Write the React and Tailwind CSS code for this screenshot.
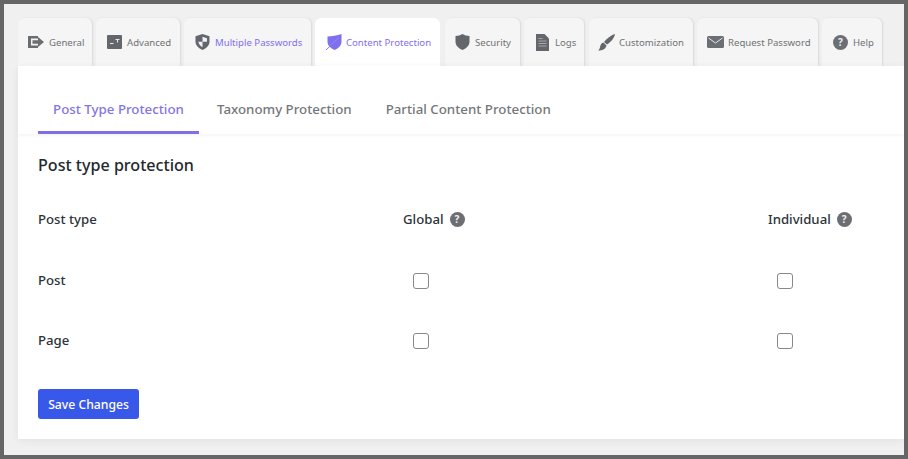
const font = { fontFamily: '"Noto Sans", sans-serif' };

const Gen = () => (
  <svg width="16" height="12" viewBox="0 0 16 12" fill="#6b6e70"><path d="M0 0h10v2.500H3v7h7V12H0z" /><path d="M4.500 4.300H10V1l6 5-6 5V7.700H4.500z" /></svg>
);
const Adv = () => (
  <svg width="15" height="14" viewBox="0 0 15 14"><rect width="15" height="14" rx="1" fill="#63666a" /><path d="M3 8.500h3.500M8.500 4.500h4M10.500 4.500v3" stroke="#e8e8e8" strokeWidth="1.100" fill="none" /></svg>
);
const Multi = () => (
  <svg width="15" height="16" viewBox="0 0 15 16"><path d="M7.500 0l7 2.300V7.500c0 4-3 6.800-7 8.500C3.500 14.300.500 11.500.500 7.500V2.300z" fill="#63666f" /><path d="M7.500 2.800l4.500 1.400v3.600H7.500zM7.500 7.800v5.400C5.500 12 3.700 10.200 3.300 7.800z" fill="#f1f1f3" /></svg>
);
const Content = () => (
  <svg width="16" height="16" viewBox="0 0 16 16"><path d="M1.500 2.500C6 2.500 11 1.500 15.500 0v7.500c0 4-2.800 6.800-6.800 8.500C4.500 14.300 1.500 11.500 1.500 7.500z" fill="#7f70ee" /><path d="M0 16L15 1.500" stroke="#7f70ee" strokeWidth=".9" /><path d="M3.500 12L13 3.500" stroke="#9d8ff3" strokeWidth=".7" /></svg>
);
const Sec = () => (
  <svg width="15" height="16" viewBox="0 0 15 16" fill="#63666a"><path d="M7.500 0c1.800 1.200 4.500 2 7 2v5.500c0 4-2.800 6.800-7 8.500-4.200-1.700-7-4.500-7-8.500V2c2.500 0 5.200-.8 7-2z" /></svg>
);
const Logs = () => (
  <svg width="13" height="17" viewBox="0 0 13 17"><path d="M0 0h8.500L13 4.500V17H0z" fill="#63666a" /><path d="M2.500 7h8M2.500 9.500h8M2.500 12h8M2.500 4.500h4" stroke="#b5b6b7" strokeWidth=".8" /></svg>
);
const Brush = () => (
  <svg width="17" height="17" viewBox="0 0 17 17" fill="#63666a"><path d="M17 0c-.5 3.500-4 8-8 10.500L6 8C9 4 13.500 1 17 0z" /><path d="M5.500 8.500L8.500 11.500c-.5 3-3.500 5-8.500 5 1.500-1 1.800-2.500 2.300-4.500S3.500 9 5.500 8.500z" /></svg>
);
const Mail = () => (
  <svg width="17" height="12" viewBox="0 0 17 12"><rect width="17" height="12" rx="1.500" fill="#6b6e72" /><path d="M1.500 2l7 5 7-5" stroke="#e8e8e8" strokeWidth="1" fill="none" /></svg>
);
const Q = ({ size = 14 }) => (
  <span className="flex items-center justify-center rounded-full bg-[#6b6e72] text-[#f0f0f0] font-bold text-[10px]" style={{ width: size, height: size }}>?</span>
);

const tabs = [
  { label: "General", icon: <Gen />, cls: "w-[74px] pl-[10px] gap-[5px]" },
  { label: "Advanced", icon: <Adv />, cls: "w-[84px] ml-[4px] pl-[11px] gap-[5px]" },
  { label: "Multiple Passwords", icon: <Multi />, cls: "w-[127px] ml-[4px] pl-[11px] gap-[5px]", hi: true },
  { label: "Content Protection", icon: <Content />, cls: "w-[125px] ml-[4px] pl-[11px] gap-[4px]", hi: true, active: true },
  { label: "Security", icon: <Sec />, cls: "w-[75px] ml-[5px] pl-[10px] gap-[5px]" },
  { label: "Logs", icon: <Logs />, cls: "w-[60px] ml-[4px] pl-[12px] gap-[6px]" },
  { label: "Customization", icon: <Brush />, cls: "w-[104px] ml-[5px] pl-[9px] gap-[4px]" },
  { label: "Request Password", icon: <Mail />, cls: "w-[121px] ml-[4px] pl-[10px] gap-[4px]" },
  { label: "Help", icon: <Q size={15} />, cls: "w-[60px] ml-[4px] pl-[11px] gap-[5px]" },
];

function Row({ name }) {
  return (
    <div className="flex items-center h-[60px] text-[13.200px] font-medium text-[#2c3338]">
      <div className="w-[375px]">{name}</div>
      <div className="w-[364px]"><input type="checkbox" className="block appearance-none w-4 h-4 rounded-[3px] border border-[#85888c] bg-white" /></div>
      <div><input type="checkbox" className="block appearance-none w-4 h-4 rounded-[3px] border border-[#85888c] bg-white" /></div>
    </div>
  );
}

export default function App() {
  return (
    <div style={font} className="w-[908px] h-[459px] overflow-hidden border-4 border-[#666666] bg-[#f0f0f1] flex flex-col">
      <div className="flex pl-[14px] pt-[14px] h-[62px] shrink-0">
        {tabs.map((t) => (
          <div key={t.label} className={`${t.cls} h-[48px] rounded-t-[6px] flex items-center text-[9.600px] ${t.active ? "bg-white" : "bg-[#f5f5f5] shadow-[1px_0_2px_rgba(0,0,0,0.1)]"} ${t.hi ? "text-[#7f70ee]" : "text-[#6f7274]"}`}>
            {t.icon}
            <span className="mt-[2px]">{t.label}</span>
          </div>
        ))}
      </div>
      <div className="ml-[14px] h-[373px] bg-white shadow-[0_2px_8px_rgba(0,0,0,0.06)] flex flex-col">
        <div className="flex h-[68px] shrink-0 pl-[20px] shadow-[0_2px_3px_rgba(0,0,0,0.04)] text-[13.300px] font-medium text-[#74777a]">
          <div className="w-[161px] h-full flex items-center justify-center pt-[22px] border-b-[3px] border-[#7f70e8] text-[#8275e6]">Post Type Protection</div>
          <div className="ml-[18px] h-full flex items-center pt-[19px]">Taxonomy Protection</div>
          <div className="ml-[34px] h-full flex items-center pt-[19px]">Partial Content Protection</div>
        </div>
        <div className="pl-[20px] flex flex-col">
          <h2 className="mt-[19px] text-[16.100px] leading-[24px] font-medium text-[#23282d]">Post type protection</h2>
          <div className="flex items-center mt-[33px] h-[20px] text-[13.200px] font-medium text-[#2c3338]">
            <div className="w-[365px]">Post type</div>
            <div className="w-[365px] flex items-center gap-[6px]">Global <Q size={15} /></div>
            <div className="flex items-center gap-[6px]">Individual <Q size={15} /></div>
          </div>
          <div className="mt-[21px]">
            <Row name="Post" />
            <Row name="Page" />
          </div>
          <button className="mt-[18px] w-[101px] h-[30px] pt-[2px] rounded-[3px] bg-[#3858e9] text-white text-[12.200px] font-medium">Save Changes</button>
        </div>
      </div>
    </div>
  );
}
